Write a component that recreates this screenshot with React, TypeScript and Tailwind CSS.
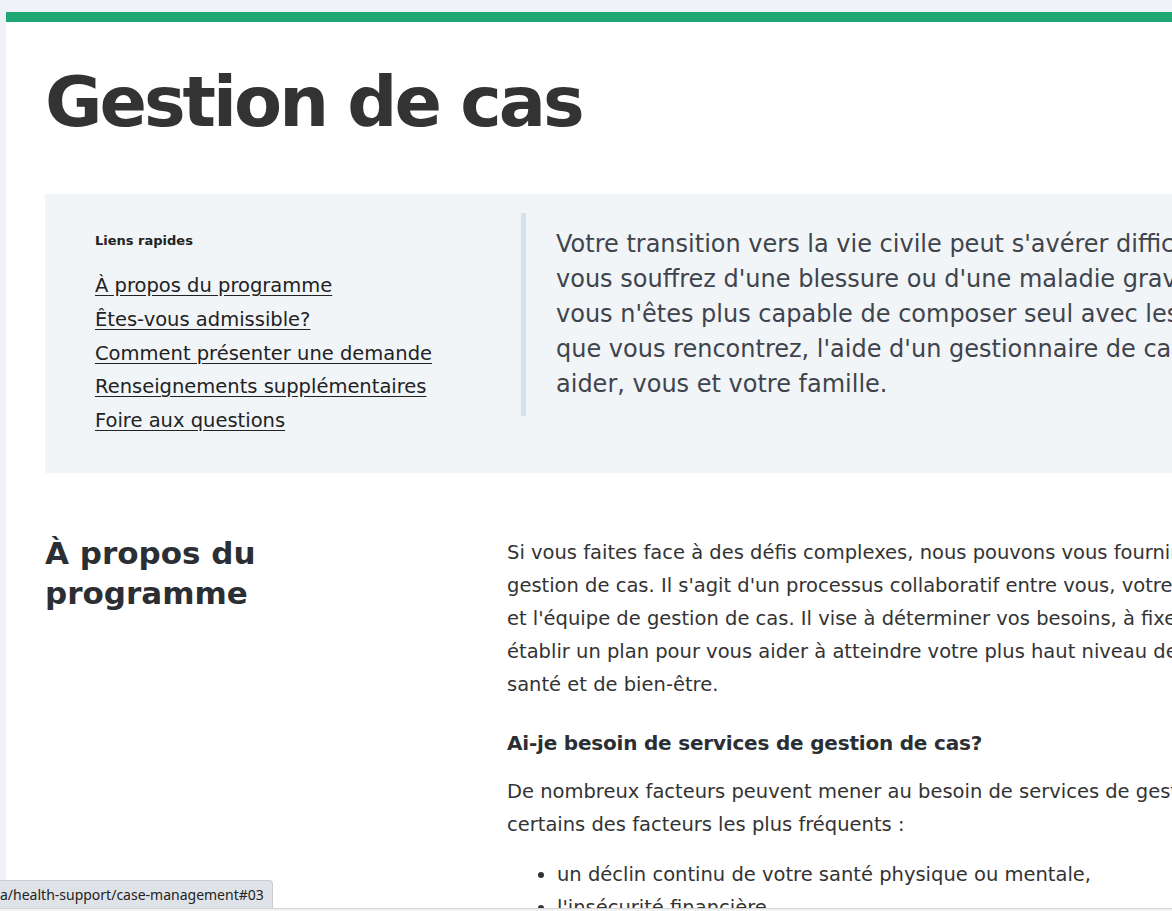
import React from "react";

const quickLinks = [
  "À propos du programme",
  "Êtes-vous admissible?",
  "Comment présenter une demande",
  "Renseignements supplémentaires",
  "Foire aux questions",
];

const introLines = [
  "Votre transition vers la vie civile peut s'avérer difficile, surtout si",
  "vous souffrez d'une blessure ou d'une maladie grave. Si vous constatez que",
  "vous n'êtes plus capable de composer seul avec les difficultés",
  "que vous rencontrez, l'aide d'un gestionnaire de cas peut vous",
  "aider, vous et votre famille.",
];

const aboutLines = [
  "Si vous faites face à des défis complexes, nous pouvons vous fournir des services de",
  "gestion de cas. Il s'agit d'un processus collaboratif entre vous, votre famille",
  "et l'équipe de gestion de cas. Il vise à déterminer vos besoins, à fixer des objectifs et à",
  "établir un plan pour vous aider à atteindre votre plus haut niveau de",
  "santé et de bien-être.",
];

export default function App() {
  return (
    <div className="relative h-[911px] w-[1172px] overflow-hidden bg-[#eef2f6] font-['DejaVu_Sans',sans-serif] text-[#333333]">
      <div className="pl-[6px] pt-3">
        <div className="w-[1600px] bg-white pb-10">
          <div className="h-[10px] bg-[#1fa774]" />
          <div className="px-[39px]">
            <h1 className="pt-[40px] text-[70px] font-bold leading-[80px] tracking-[-3px] text-[#333333]">
              Gestion de cas
            </h1>

            <div className="mt-[52px] flex items-start bg-[#f1f5f8] pb-[35px] pt-[19px]">
              <div className="w-[476px] shrink-0 pl-[50px] pt-[18px]">
                <p className="text-[13px] font-bold leading-5 text-[#222]">Liens rapides</p>
                <ul className="mt-[18px] flex flex-col">
                  {quickLinks.map((l) => (
                    <li key={l} className="text-[19.5px] leading-[33.8px]">
                      <a href="#" className="text-[#222] underline underline-offset-[3px]">
                        {l}
                      </a>
                    </li>
                  ))}
                </ul>
              </div>
              <div className="border-l-[5px] border-[#d6e1e9] py-[14px] pl-[30px] text-[24px] leading-[35px] text-[#3f444c]">
                {introLines.map((l) => (
                  <div key={l} className="whitespace-nowrap">
                    {l}
                  </div>
                ))}
              </div>
            </div>

            <div className="mt-[60px] flex">
              <div className="w-[462px] shrink-0">
                <h2 className="text-[31px] font-bold leading-[40px] text-[#2b2f33]">
                  À propos du
                  <br />
                  programme
                </h2>
              </div>
              <div className="pt-[3px] text-[19.5px] leading-[33px] text-[#333]">
                {aboutLines.map((l) => (
                  <div key={l} className="whitespace-nowrap">
                    {l}
                  </div>
                ))}
                <h3 className="mt-[25px] text-[20px] font-bold leading-[34px] tracking-[-0.2px] text-[#2b2f33]">
                  Ai-je besoin de services de gestion de cas?
                </h3>
                <div className="mt-[15px]">
                  <div className="whitespace-nowrap">
                    De nombreux facteurs peuvent mener au besoin de services de gestion de cas. Voici
                  </div>
                  <div className="whitespace-nowrap">certains des facteurs les plus fréquents :</div>
                </div>
                <ul className="mt-[17px] list-disc pl-[50px]">
                  <li className="whitespace-nowrap">un déclin continu de votre santé physique ou mentale,</li>
                  <li className="whitespace-nowrap">l'insécurité financière,</li>
                </ul>
              </div>
            </div>
          </div>
        </div>
      </div>

      <div className="absolute bottom-[3px] left-0 rounded-tr-[4px] border-r border-t border-[#c9cdd2] bg-[#dfe3e8] py-[4px] pl-0 pr-[8px] font-['Noto_Sans',sans-serif] text-[14px] leading-[19px] text-[#222]">
        a/health-support/case-management#03
      </div>
      <div className="absolute bottom-0 left-0 h-[3px] w-full border-t border-[#d4d4d4] bg-[#f3f3f3]" />
    </div>
  );
}
